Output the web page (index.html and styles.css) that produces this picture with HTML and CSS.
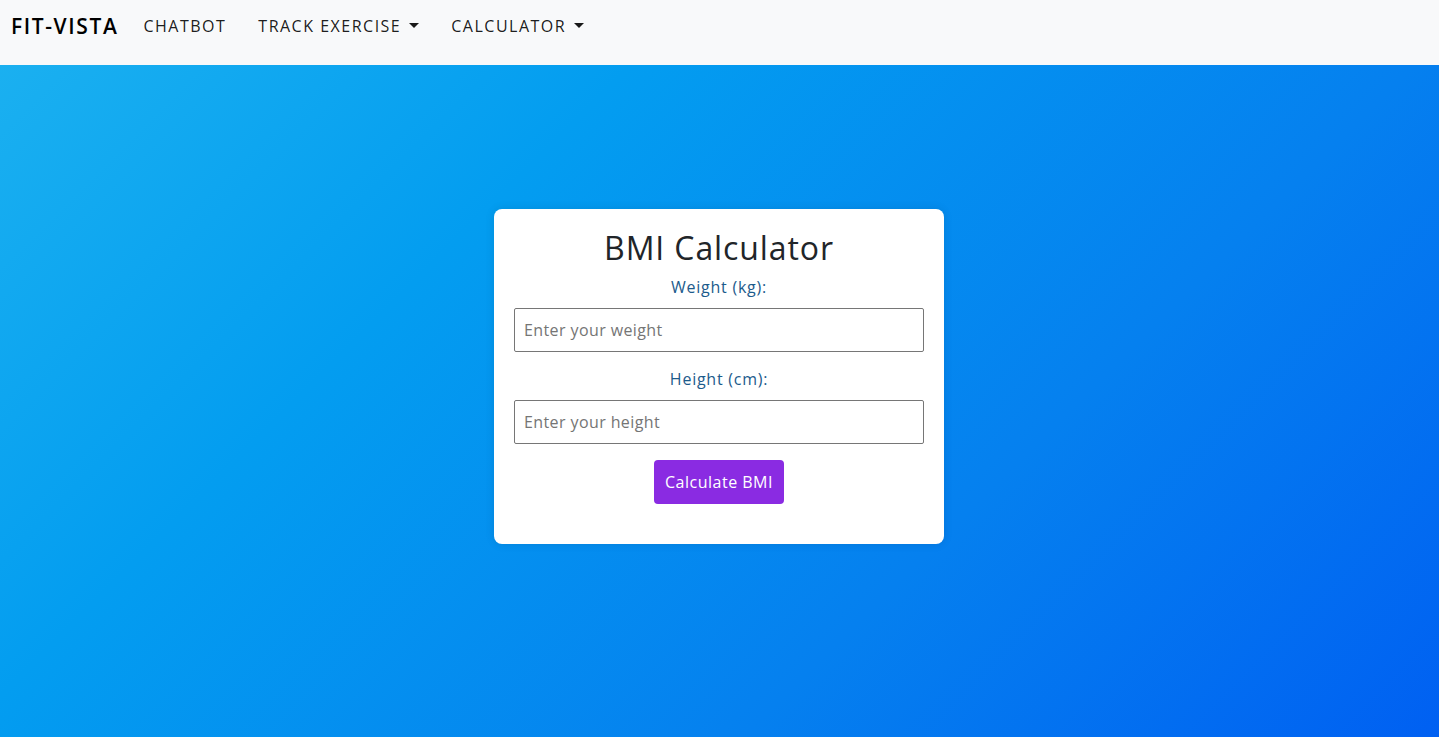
FILE: index.html
```html
<!DOCTYPE html>
<html lang="en">
<head>
<meta charset="utf-8">
<title>FIT-VISTA – BMI Calculator</title>
<link rel="stylesheet" href="styles.css">
</head>
<body>
<nav class="navbar">
  <a class="brand" href="#">FIT-VISTA</a>
  <ul class="nav">
    <li><a class="nav-link" href="#">CHATBOT</a></li>
    <li><a class="nav-link dropdown" href="#">TRACK EXERCISE</a></li>
    <li><a class="nav-link dropdown" href="#">CALCULATOR</a></li>
  </ul>
</nav>
<main class="main">
  <div class="card">
    <h1 class="title">BMI Calculator</h1>
    <label class="label" for="weight">Weight (kg):</label>
    <input class="input" id="weight" type="number" placeholder="Enter your weight">
    <label class="label" for="height">Height (cm):</label>
    <input class="input" id="height" type="number" placeholder="Enter your height">
    <button class="btn" type="button">Calculate BMI</button>
  </div>
</main>
</body>
</html>
```
FILE: styles.css
```css
* { box-sizing: border-box; }
html, body { margin: 0; padding: 0; }
body {
  font-family: "Open Sans", "DejaVu Sans", sans-serif;
  min-height: 100vh;
  background: linear-gradient(135deg, #1db2f0 0%, #039df0 32%, #0580ef 68%, #0060f2 100%);
  color: #212529;
}
.navbar {
  height: 65px;
  background: #f8f9fa;
  display: flex;
  align-items: flex-start;
  padding: 11px 0 0 11px;
}
.brand {
  font-size: 21px;
  font-weight: 600;
  letter-spacing: 1.6px;
  color: #000;
  text-decoration: none;
  line-height: 30px;
  margin-right: 9px;
}
.nav {
  list-style: none;
  margin: 0;
  padding: 0;
  display: flex;
}
.nav-link {
  display: block;
  padding: 0 16px;
  font-size: 16px;
  letter-spacing: 1.5px;
  line-height: 30px;
  color: rgba(0, 0, 0, 0.9);
  text-decoration: none;
}
.dropdown::after {
  content: "";
  display: inline-block;
  margin-left: 8px;
  vertical-align: 4px;
  border-top: 5px solid rgba(0, 0, 0, 0.9);
  border-left: 5px solid transparent;
  border-right: 5px solid transparent;
}
.main {
  padding: 144px 1px 0 0;
  display: flex;
  justify-content: center;
}
.card {
  width: 450px;
  background: #fff;
  border-radius: 8px;
  padding: 20px 20px 40px;
  box-shadow: 0 0 10px rgba(0, 0, 0, 0.1);
  display: flex;
  flex-direction: column;
  align-items: center;
}
.title {
  margin: 0 0 8px;
  font-size: 32px;
  font-weight: 400;
  letter-spacing: 0.9px;
  line-height: 38px;
  color: #212529;
}
.label {
  font-size: 16px;
  letter-spacing: 0.75px;
  line-height: 24px;
  color: #1c5b8c;
  margin-bottom: 9px;
}
.input {
  width: 100%;
  height: 44px;
  padding: 10px 9px;
  font-family: inherit;
  font-size: 16px;
  letter-spacing: 0.4px;
  border: 1px solid #767676;
  border-radius: 2px;
  margin-bottom: 15px;
  background: #fff;
}
.input::placeholder { color: #757575; }
.btn {
  margin-top: 1px;
  width: 130px;
  height: 44px;
  background: #8a2be2;
  color: #fff;
  border: none;
  border-radius: 4px;
  font-family: inherit;
  font-size: 16px;
  letter-spacing: 0.5px;
}
```
